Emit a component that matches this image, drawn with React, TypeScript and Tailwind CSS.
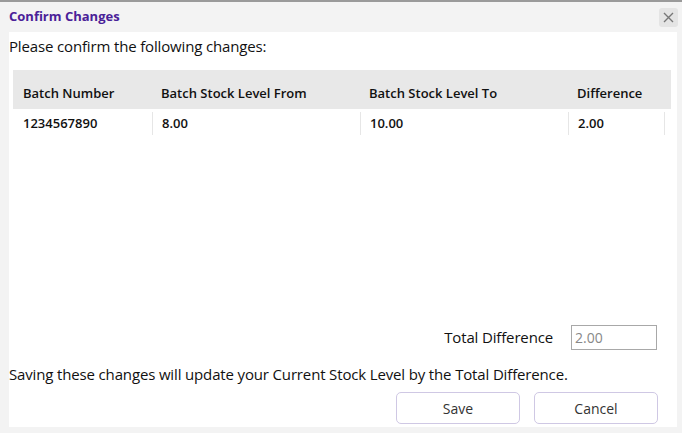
import React from "react";

export default function App() {
  const rows = [{ batch: "1234567890", from: "8.00", to: "10.00", diff: "2.00" }];
  return (
    <div className="w-[682px] h-[433px] bg-[#f3f3f3] border-t-2 border-[#9a9a9a] flex flex-col text-[#111]" style={{ fontFamily: "'Open Sans', 'Liberation Sans', sans-serif" }}>
      <div className="h-[30px] flex items-center justify-between pl-[9px] pr-[4px]">
        <span className="text-[13px] font-bold text-[#4a2198]">Confirm Changes</span>
        <button className="w-[19px] h-[19px] rounded-[3px] bg-[#e4e4e4] flex items-center justify-center text-[#777]">
          <svg width="11" height="11" viewBox="0 0 11 11" fill="none" stroke="currentColor" strokeWidth="1.4">
            <path d="M1 1L10 10M10 1L1 10" />
          </svg>
        </button>
      </div>
      <div className="ml-[9px] mr-[5px] h-[395px] bg-white flex flex-col">
        <div className="text-[15px] pt-[4px] leading-[20px] tracking-[-0.15px]">Please confirm the following changes:</div>
        <div className="mt-[14px] ml-[4px] mr-[6px]">
          <div className="grid grid-cols-[139px_208px_208px_97px] bg-[#e8e8e8] h-[39px] items-end pb-[6px] text-[13px] font-semibold">
            <div className="pl-[10px]">Batch Number</div>
            <div className="pl-[9px]">Batch Stock Level From</div>
            <div className="pl-[9px]">Batch Stock Level To</div>
            <div className="pl-[9px]">Difference</div>
          </div>
          {rows.map((r) => (
            <div key={r.batch} className="grid grid-cols-[139px_208px_208px_97px] h-[26px] items-center pt-[3px] text-[13px] font-semibold">
              <div className="pl-[10px]">{r.batch}</div>
              <div className="pl-[9px] h-full flex items-center border-l border-[#e6e6e6]">{r.from}</div>
              <div className="pl-[9px] h-full flex items-center border-l border-[#e6e6e6]">{r.to}</div>
              <div className="pl-[9px] h-full flex items-center border-l border-r border-[#e6e6e6]">{r.diff}</div>
            </div>
          ))}
        </div>
        <div className="flex-1" />
        <div className="flex items-center justify-end pr-[20px] gap-[18px]">
          <span className="text-[15px] tracking-[-0.15px]">Total Difference</span>
          <input
            readOnly
            value="2.00"
            className="w-[86px] h-[25px] border border-[#a8a8a8] px-[3px] text-[14px] text-[#888] outline-none"
          />
        </div>
        <div className="mt-[14px] text-[15px] leading-[20px] tracking-[-0.15px]">
          Saving these changes will update your Current Stock Level by the Total Difference.
        </div>
        <div className="flex justify-end gap-[14px] pr-[19px] mt-[8px] mb-[3px]">
          <button className="w-[124px] h-[32px] rounded-[5px] border border-[#cfc8e4] text-[14px] text-[#333]">Save</button>
          <button className="w-[124px] h-[32px] rounded-[5px] border border-[#cfc8e4] text-[14px] text-[#333]">Cancel</button>
        </div>
      </div>
    </div>
  );
}
